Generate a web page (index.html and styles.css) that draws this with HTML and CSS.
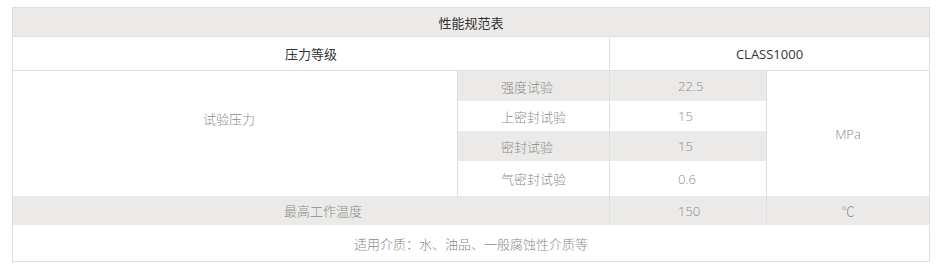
FILE: index.html
```html
<!DOCTYPE html>
<html lang="zh-CN">
<head>
    <meta charset="UTF-8">
    <meta name="viewport" content="width=device-width, initial-scale=1.0">
    <title>性能规范表</title>
    <link rel="stylesheet" href="styles.css">
</head>
<body>
    <table class="spec">
        <colgroup>
            <col class="c1">
            <col class="c2">
            <col class="c3">
            <col class="c4">
        </colgroup>
        <!-- 表头 -->
        <tr class="title">
            <th colspan="4">性能规范表</th>
        </tr>
        <tr class="head">
            <th colspan="2">压力等级</th>
            <th colspan="2">CLASS1000</th>
        </tr>
        <!-- 试验压力 -->
        <tr class="sub gray">
            <td rowspan="4" class="white lift">试验压力</td>
            <td class="name">强度试验</td>
            <td class="num">22.5</td>
            <td rowspan="4" class="white">MPa</td>
        </tr>
        <tr class="sub">
            <td class="name">上密封试验</td>
            <td class="num">15</td>
        </tr>
        <tr class="sub gray">
            <td class="name">密封试验</td>
            <td class="num">15</td>
        </tr>
        <tr class="sub last">
            <td class="name">气密封试验</td>
            <td class="num">0.6</td>
        </tr>
        <!-- 温度 -->
        <tr class="temp gray">
            <td colspan="2" class="shift">最高工作温度</td>
            <td class="num">150</td>
            <td>℃</td>
        </tr>
        <tr class="note">
            <td colspan="4">适用介质：水、油品、一般腐蚀性介质等</td>
        </tr>
    </table>
</body>
</html>
```

FILE: styles.css
```css
body {
    margin: 0;
    padding: 7px 0 0 12px;
    background-color: #fff;
    font-family: "Open Sans", "Noto Sans CJK SC", sans-serif;
}

.spec {
    width: 917px;
    table-layout: fixed;
    border-collapse: collapse;
    border: 1px solid #dcdcdc;
    font-size: 13px;
    color: #8a8a8a;
    font-weight: 300;
}

.c1 { width: 445px; }
.c2 { width: 152px; }
.c3 { width: 157px; }
.c4 { width: 163px; }

th, td {
    text-align: center;
    padding: 0;
    border: 1px solid #dedede;
}

th {
    color: #333;
    font-weight: 400;
}

.title th {
    height: 28px;
    background-color: #ebeae8;
    border-left: none;
    border-right: none;
}

.head th {
    height: 33px;
}

.sub td {
    height: 30px;
    border-top: none;
    border-bottom: none;
}

.sub.last td {
    height: 35px;
}

.gray td {
    background-color: #ebeae8;
}

.gray td.white {
    background-color: #fff;
}

/* 项目名与数值列左对齐 */
td.name {
    text-align: left;
    padding-left: 43px;
}

td.num {
    text-align: left;
    padding-left: 68px;
}

.lift {
    padding: 0 12px 30px 0;
}

.temp td {
    height: 29px;
    border-top: none;
    border-bottom: none;
}

.temp td:first-child {
    border-left: none;
}

.temp td.shift {
    padding-left: 24px;
}

.note td {
    height: 36px;
    border-top: none;
}
```
